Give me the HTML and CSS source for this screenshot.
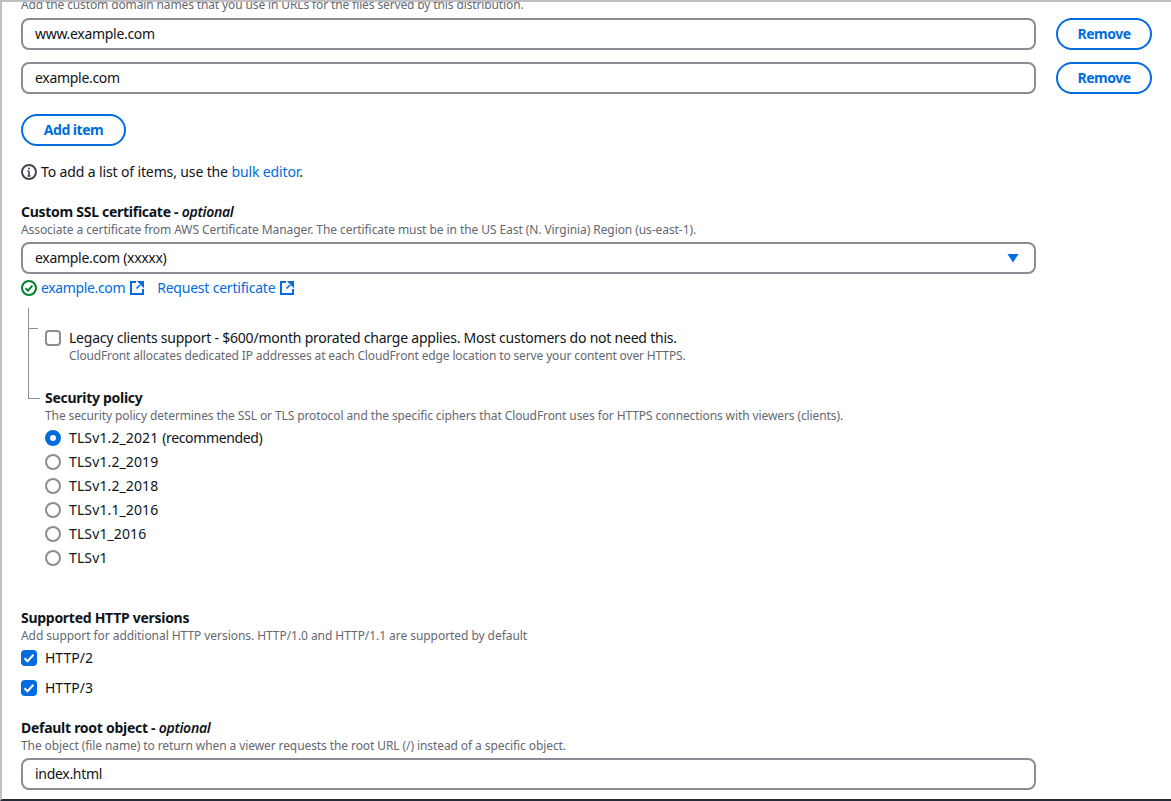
FILE: index.html
```html
<!DOCTYPE html>
<html lang="en">
<head>
<meta charset="utf-8">
<title>Distribution settings</title>
<link rel="stylesheet" href="styles.css">
</head>
<body>
<div class="frame">
  <main class="form">
    <p class="desc clipped">Add the custom domain names that you use in URLs for the files served by this distribution.</p>
    <div class="item-row first"><div class="field"><span>www.example.com</span></div><button class="btn remove">Remove</button></div>
    <div class="item-row"><div class="field"><span>example.com</span></div><button class="btn remove">Remove</button></div>
    <button class="btn add">Add item</button>
    <p class="info">
      <svg class="icon" viewBox="0 0 16 16"><circle cx="8" cy="8" r="7" fill="none" stroke="#424650" stroke-width="2"/><path d="M8 7v5M6.5 12h3M6.5 7H8" fill="none" stroke="#424650" stroke-width="1.6"/><rect x="7.1" y="3.6" width="1.8" height="1.8" fill="#424650"/></svg>
      <span>To add a list of items, use the <a href="#">bulk editor</a>.</span>
    </p>

    <h3 class="label ssl">Custom SSL certificate - <em>optional</em></h3>
    <p class="desc assoc">Associate a certificate from AWS Certificate Manager. The certificate must be in the US East (N. Virginia) Region (us-east-1).</p>
    <div class="field select"><span>example.com (xxxxx)</span><svg class="caret" viewBox="0 0 12 10"><path d="M0.5 1h11L6 9.5z" fill="#006ce0"/></svg></div>
    <div class="links">
      <svg class="icon" viewBox="0 0 16 16"><circle cx="8" cy="8" r="7" fill="none" stroke="#00802f" stroke-width="2"/><path d="M4.6 8.2l2.4 2.4 4.4-5" fill="none" stroke="#00802f" stroke-width="2"/></svg>
      <a href="#" class="cert">example.com</a>
      <svg class="ext" viewBox="0 0 14 14"><path d="M6 1H1v12h12V8" fill="none" stroke="#006ce0" stroke-width="2"/><path d="M8 0h6v6zM12 2L6.5 7.5" fill="#006ce0" stroke="#006ce0" stroke-width="1.6"/></svg>
      <a href="#" class="req">Request certificate</a>
      <svg class="ext" viewBox="0 0 14 14"><path d="M6 1H1v12h12V8" fill="none" stroke="#006ce0" stroke-width="2"/><path d="M8 0h6v6zM12 2L6.5 7.5" fill="#006ce0" stroke="#006ce0" stroke-width="1.6"/></svg>
    </div>

    <section class="nested">
      <label class="check legacy"><span class="box"></span><span>Legacy clients support - $600/month prorated charge applies. Most customers do not need this.</span></label>
      <p class="desc indent">CloudFront allocates dedicated IP addresses at each CloudFront edge location to serve your content over HTTPS.</p>
      <h3 class="label policy">Security policy</h3>
      <p class="desc secdesc">The security policy determines the SSL or TLS protocol and the specific ciphers that CloudFront uses for HTTPS connections with viewers (clients).</p>
      <div class="radios">
        <label class="radio on"><span class="dot"></span><span>TLSv1.2_2021 <span class="rec">(recommended)</span></span></label>
        <label class="radio"><span class="dot"></span><span>TLSv1.2_2019</span></label>
        <label class="radio"><span class="dot"></span><span>TLSv1.2_2018</span></label>
        <label class="radio"><span class="dot"></span><span>TLSv1.1_2016</span></label>
        <label class="radio"><span class="dot"></span><span>TLSv1_2016</span></label>
        <label class="radio"><span class="dot"></span><span>TLSv1</span></label>
      </div>
    </section>

    <h3 class="label http">Supported HTTP versions</h3>
    <p class="desc httpdesc">Add support for additional HTTP versions. HTTP/1.0 and HTTP/1.1 are supported by default</p>
    <label class="check on http2"><span class="box"><svg viewBox="0 0 16 16"><path d="M3.5 8.2l3 3 6-6.5" fill="none" stroke="#fff" stroke-width="2"/></svg></span><span>HTTP/2</span></label>
    <label class="check on http3"><span class="box"><svg viewBox="0 0 16 16"><path d="M3.5 8.2l3 3 6-6.5" fill="none" stroke="#fff" stroke-width="2"/></svg></span><span>HTTP/3</span></label>

    <h3 class="label root">Default root object - <em>optional</em></h3>
    <p class="desc">The object (file name) to return when a viewer requests the root URL (/) instead of a specific object.</p>
    <div class="field select"><span>index.html</span></div>
  </main>
</div>
</body>
</html>
```

FILE: styles.css
```css
* { box-sizing: border-box; }
html, body { margin: 0; height: 801px; overflow: hidden; background: #fff; }
body { font-family: "Noto Sans", sans-serif; font-size: 14px; line-height: 20px; color: #0f141a; }
.frame { height: 801px; overflow: hidden; border-top: 2px solid #c0c0c4; border-left: 2px solid #c0c0c4; border-bottom: 2px solid #232b37; }
.form { padding-left: 19px; width: 1152px; }
p, h3 { margin: 0; }
a { color: #006ce0; text-decoration: none; }
.desc { font-size: 12px; line-height: 16px; color: #656871; letter-spacing: -0.09px; }
.clipped { margin-top: -5px; letter-spacing: -0.125px; }
.assoc { letter-spacing: -0.075px; }
.secdesc { letter-spacing: -0.103px; }
.httpdesc { letter-spacing: -0.056px; }
.item-row { display: flex; gap: 20px; margin-bottom: 12px; }
.item-row.first { margin-top: 5px; }
.field { flex: 1; width: 1015px; max-width: 1015px; height: 32px; border: 2px solid #8c8c94; border-radius: 8px; padding: 4px 12px; display: flex; align-items: center; justify-content: space-between; background: #fff; letter-spacing: -0.3px; }
.btn { font: 700 14px/20px "Noto Sans", sans-serif; letter-spacing: -0.5px; color: #006ce0; background: #fff; border: 2px solid #006ce0; border-radius: 20px; height: 32px; padding: 0; }
.remove { width: 96px; }
.add { width: 105px; display: block; margin-top: 20px; }
.info { display: flex; align-items: center; gap: 4px; margin-top: 16px; letter-spacing: -0.13px; }
.icon { width: 16px; height: 16px; flex: none; }
.label { font-size: 14px; line-height: 20px; font-weight: 700; letter-spacing: -0.28px; }
.label em { font-style: italic; font-weight: 600; }
.ssl { margin-top: 20px; }
.select { margin-top: 4px; }
.caret { width: 12px; height: 10px; margin-right: 3px; }
.links { display: flex; align-items: center; margin-top: 4px; height: 20px; }
.links .icon { margin-right: 4px; }
.cert { letter-spacing: -0.36px; }
.ext { width: 14px; height: 14px; margin-left: 5px; flex: none; }
.req { margin-left: 13px; letter-spacing: -0.21px; }
.nested { position: relative; margin-top: 10px; padding: 20px 0 0 24px; }
.nested::before { content: ""; position: absolute; left: 7px; top: 0; width: 11px; height: 90px; border-left: 1px solid #8c8c94; border-bottom: 1px solid #8c8c94; }
.nested::after { content: ""; position: absolute; left: 7px; top: 20px; width: 10px; height: 1px; background: #8c8c94; }
.check { display: flex; align-items: center; gap: 8px; height: 20px; }
.legacy { letter-spacing: -0.22px; }
.box { width: 16px; height: 16px; border: 2px solid #8c8c94; border-radius: 4px; flex: none; display: block; }
.check.on .box { background: #006ce0; border: 0; }
.box svg { display: block; width: 16px; height: 16px; }
.indent { margin-left: 24px; letter-spacing: -0.14px; }
.policy { margin-top: 24px; }
.radios { display: flex; flex-direction: column; gap: 4px; margin-top: 4px; }
.radio { display: flex; align-items: center; gap: 8px; height: 20px; letter-spacing: 0.12px; }
.rec { letter-spacing: -0.35px; }
.dot { width: 16px; height: 16px; border-radius: 50%; border: 2px solid #8c8c94; flex: none; }
.radio.on .dot { border: 5px solid #006ce0; background: #fff; }
.http { margin-top: 40px; }
.http2 { margin-top: 4px; }
.http3 { margin-top: 10px; }
.root { margin-top: 20px; }
```
